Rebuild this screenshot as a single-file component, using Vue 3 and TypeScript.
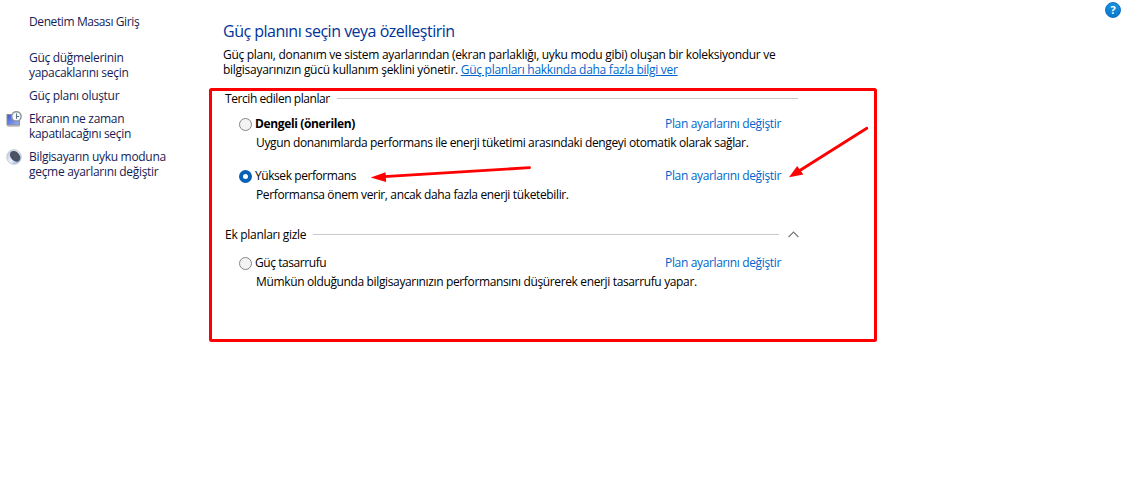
<script setup lang="ts">
import {ref} from "vue";
import type {Ref} from "vue";

interface Task {
  lines: string[];
  icon?: string;
}

interface Plan {
  id: string;
  name: string;
  description: string;
  recommended?: boolean;
}

const tasks: Task[] = [
  {lines: ["Güç düğmelerinin", "yapacaklarını seçin"]},
  {lines: ["Güç planı oluştur"]},
  {lines: ["Ekranın ne zaman", "kapatılacağını seçin"], icon: "display"},
  {lines: ["Bilgisayarın uyku moduna", "geçme ayarlarını değiştir"], icon: "sleep"}
]

const preferredPlans: Plan[] = [
  {
    id: "balanced",
    name: "Dengeli (önerilen)",
    description: "Uygun donanımlarda performans ile enerji tüketimi arasındaki dengeyi otomatik olarak sağlar.",
    recommended: true
  },
  {
    id: "performance",
    name: "Yüksek performans",
    description: "Performansa önem verir, ancak daha fazla enerji tüketebilir."
  }
]

const extraPlans: Plan[] = [
  {
    id: "saver",
    name: "Güç tasarrufu",
    description: "Mümkün olduğunda bilgisayarınızın performansını düşürerek enerji tasarrufu yapar."
  }
]

const groups = [
  {id: "preferred", title: "Tercih edilen planlar", plans: preferredPlans, collapsible: false},
  {id: "extra", title: "Ek planları gizle", plans: extraPlans, collapsible: true}
]

const selected: Ref<string> = ref("performance");
const expanded: Ref<boolean> = ref(true);
</script>

<template>
  <div class="power-options">
    <nav class="sidebar">
      <a class="home">Denetim Masası Giriş</a>
      <a v-for="task in tasks" :key="task.lines[0]" class="task">
        <span class="task-icon">
          <svg v-if="task.icon === 'display'" width="17" height="17" viewBox="0 0 17 17">
            <defs>
              <linearGradient id="screen" x1="0" y1="0" x2="1" y2="1">
                <stop offset="0" stop-color="#3a55cf"/>
                <stop offset="1" stop-color="#9db4fa"/>
              </linearGradient>
            </defs>
            <rect x="1" y="3.5" width="12.5" height="10.5" fill="url(#screen)" stroke="#8d8d8d"/>
            <path d="M1.5 15h12" stroke="#999"/>
            <circle cx="10.4" cy="5.4" r="4.7" fill="#f6f8fa" stroke="#8e959b" stroke-width="1.5"/>
            <path d="M10.5 2.5v5.4M10.5 5.5h2.6" fill="none" stroke="#58718a"/>
          </svg>
          <svg v-if="task.icon === 'sleep'" width="17" height="17" viewBox="0 0 17 17">
            <defs>
              <linearGradient id="moon" x1="0" y1="0.2" x2="0.8" y2="1">
                <stop offset="0" stop-color="#b7c9e6"/>
                <stop offset="0.55" stop-color="#edf4fd"/>
                <stop offset="1" stop-color="#7ea3d8"/>
              </linearGradient>
            </defs>
            <circle cx="8" cy="8" r="7.3" fill="url(#moon)" stroke="#c9ccd2" stroke-width="1"/>
            <ellipse cx="9.1" cy="7.3" rx="6" ry="4.4" fill="#4b5264" transform="rotate(48 9.1 7.3)"/>
          </svg>
        </span>
        <span class="task-text">
          <span v-for="line in task.lines" :key="line" class="line">{{ line }}</span>
        </span>
      </a>
    </nav>

    <main class="content">
      <h1>Güç planını seçin veya özelleştirin</h1>
      <p class="intro">
        <span class="line">Güç planı, donanım ve sistem ayarlarından (ekran parlaklığı, uyku modu gibi) oluşan bir koleksiyondur ve</span>
        <span class="line intro-more">bilgisayarınızın gücü kullanım şeklini yönetir. <a class="more">Güç planları hakkında daha fazla bilgi ver</a></span>
      </p>

      <section v-for="group in groups" :key="group.id" class="group" :class="group.id">
        <header class="group-header">
          <span class="group-title">{{ group.title }}</span>
          <span class="rule"></span>
          <button v-if="group.collapsible" class="toggle" @click="expanded = !expanded">
            <svg width="11" height="7" viewBox="0 0 11 7">
              <path d="M0.6 6 5.5 1.1 10.4 6" fill="none" stroke="#777" stroke-width="1.1"/>
            </svg>
          </button>
        </header>
        <template v-if="!group.collapsible || expanded">
          <div v-for="plan in group.plans" :key="plan.id" class="plan">
            <div class="plan-row">
              <label class="plan-label">
                <input v-model="selected" type="radio" name="plan" :value="plan.id"/>
                <span class="plan-name" :class="{ recommended: plan.recommended }">{{ plan.name }}</span>
              </label>
              <a class="change">Plan ayarlarını değiştir</a>
            </div>
            <div class="description">{{ plan.description }}</div>
          </div>
        </template>
      </section>
    </main>

    <button class="help">?</button>

    <svg class="markup" width="1123" height="479" viewBox="0 0 1123 479">
      <rect x="210.5" y="89.5" width="665" height="251" rx="1" fill="none" stroke="#f00" stroke-width="3"/>
      <g stroke="#f00" stroke-width="2.8" stroke-linecap="round">
        <path d="M529.5 167.7 384 176.6"/>
        <path d="M866.8 128.3 799 171"/>
      </g>
      <path d="M370.7 177.5 385.6 172.3 386.1 181.9Z" fill="#f00"/>
      <path d="M789 177.2 797.2 166 803.3 174.6Z" fill="#f00"/>
    </svg>
  </div>
</template>

<style>
body {
  margin: 0;
  background: #fff;
  overflow: hidden;
}
</style>

<style scoped>
.power-options {
  position: relative;
  display: flex;
  box-sizing: border-box;
  width: 1123px;
  height: 479px;
  background: #fff;
  color: #000;
  font-family: "Open Sans", "Noto Sans", sans-serif;
  font-size: 12px;
  line-height: 15px;
  letter-spacing: -0.29px;
  white-space: nowrap;
}

.line {
  display: block;
}

.sidebar {
  display: flex;
  flex-direction: column;
  gap: 8px;
  flex: none;
  width: 223px;
  box-sizing: border-box;
  padding: 14px 0 0 6px;
  letter-spacing: -0.3px;
  color: #151c55;
}

.home {
  padding-left: 23px;
  margin-bottom: 13px;
  letter-spacing: -0.4px;
}

.task {
  display: flex;
}

.task-icon {
  flex: none;
  width: 23px;
  height: 15px;
}

.task-icon svg {
  display: block;
}

.content {
  width: 576px;
  padding-top: 20px;
}

h1 {
  margin: 0;
  font-size: 16px;
  font-weight: 400;
  line-height: 22px;
  letter-spacing: -0.5px;
  color: #003399;
}

.intro {
  margin: 5px 0 13px;
}

.intro-more {
  letter-spacing: -0.27px;
}

.more {
  color: #0066cc;
  text-decoration: underline;
}

.group {
  padding-left: 2px;
}

.group-header {
  display: flex;
  align-items: center;
  height: 16px;
  margin-bottom: 10px;
}

.group.preferred .group-header {
  letter-spacing: -0.43px;
}

.group.extra .group-header {
  margin-top: 23px;
  margin-bottom: 13px;
}

.rule {
  flex: 1;
  height: 1px;
  margin: 0 1px 0 7px;
  background: #c9c9c9;
}

.toggle {
  display: flex;
  padding: 0;
  margin-left: 8px;
  border: none;
  background: none;
}

.plan {
  padding-left: 14px;
}

.plan + .plan {
  margin-top: 17px;
}

.plan-row {
  display: flex;
  justify-content: space-between;
  align-items: center;
  height: 16px;
  padding-right: 18px;
}

.plan-label {
  display: flex;
  align-items: center;
  letter-spacing: -0.43px;
}

.plan-name,
.change {
  padding-bottom: 2px;
}

input {
  appearance: none;
  box-sizing: border-box;
  width: 13px;
  height: 13px;
  margin: 1px 3px 0 0;
  border: 1px solid #858585;
  border-radius: 50%;
  background: #f3f3f3;
}

input:checked {
  border: 4px solid #0560b6;
  background: #fff;
}

.recommended {
  font-weight: 700;
  letter-spacing: -0.36px;
}

.change {
  letter-spacing: -0.35px;
  color: #0066cc;
}

.description {
  height: 16px;
  line-height: 16px;
  margin-top: 3px;
  padding-left: 17px;
  letter-spacing: -0.36px;
}

.help {
  position: absolute;
  top: 2px;
  left: 1105px;
  width: 16px;
  height: 16px;
  padding: 0;
  border: 1px solid #0d6fc0;
  border-radius: 50%;
  background: linear-gradient(#1791e0, #0878cd);
  color: #fff;
  font: 700 11px/14px "Open Sans", sans-serif;
  text-align: center;
}

.markup {
  position: absolute;
  top: 0;
  left: 0;
  pointer-events: none;
}
</style>
